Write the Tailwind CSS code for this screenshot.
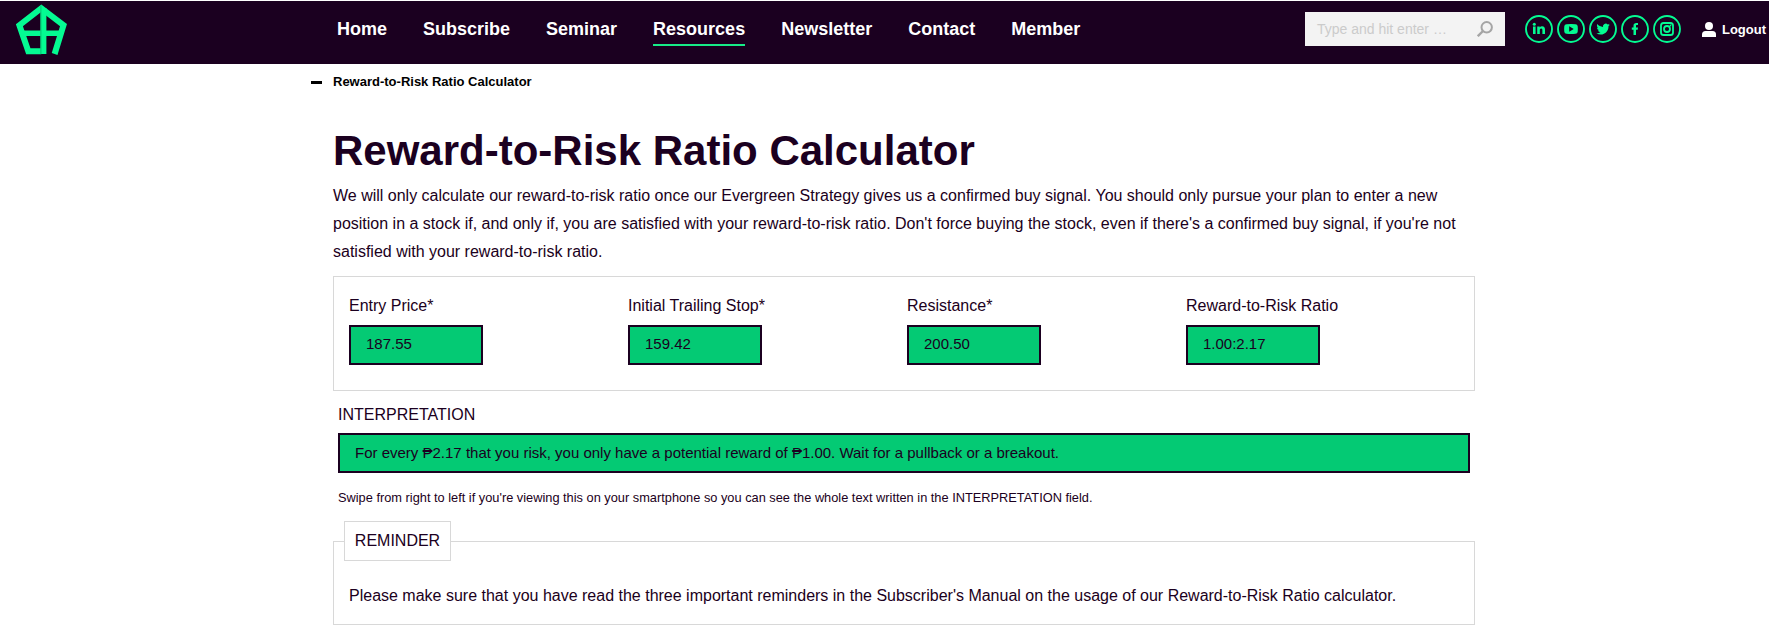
<!DOCTYPE html>
<html lang="en">
<head>
<meta charset="utf-8">
<title>Reward-to-Risk Ratio Calculator</title>
<script src="https://cdn.jsdelivr.net/npm/@tailwindcss/browser@4"></script>
</head>
<body class="bg-white pt-px font-['Liberation_Sans',Arial,sans-serif] text-[#1b0020] w-[1769px] h-[641px] overflow-hidden">
<header class="flex h-[63px] bg-[#1b0020] text-white">
  <svg class="ml-[15px] mt-[3px] h-[51px] w-[53px] shrink-0" viewBox="15 4 53 51" fill="none" stroke="#04fb92" stroke-width="6">
    <path d="M41.3 51.200H28.300L19.400 25.200 41.300 8.200 63.500 25.200 54.600 54"/>
    <path d="M43.400 8V54"/>
    <path d="M22 33.200H61" stroke-width="5.400"/>
    <path d="M40.900 5V54" stroke="#08b56c" stroke-width=".8"/>
  </svg>
  <nav class="ml-[269px] flex gap-9 pt-[14px] text-lg font-bold leading-7">
    <a>Home</a><a>Subscribe</a><a>Seminar</a><a class="h-[31px] border-b-2 border-[#17ec88]">Resources</a><a>Newsletter</a><a>Contact</a><a>Member</a>
  </nav>
  <div class="ml-auto mt-[11px] flex h-[34px] w-[200px] shrink-0 items-center justify-between bg-[#f3f3f3] pl-3 pr-3 text-sm text-[#cbcbcb]">
    <span>Type and hit enter …</span>
    <svg class="h-4 w-4" viewBox="0 0 16 16" fill="none" stroke="#a5a5a5" stroke-width="2"><circle cx="9.7" cy="6.3" r="5.2"/><path d="M6 10 .8 15.2" stroke-width="2.4"/></svg>
  </div>
  <div class="ml-5 mt-[13.5px] flex h-7 shrink-0 gap-1 text-[#04fb92]">
    <svg class="size-7" viewBox="0 0 28 28" fill="currentColor"><circle cx="14" cy="14" r="13" fill="none" stroke="currentColor" stroke-width="1.9"/><circle cx="9.3" cy="9.2" r="1.5"/><path d="M8 11.500h2.600V19H8zM12.200 11.500h2.500v1c.5-.8 1.300-1.200 2.400-1.200 2.100 0 2.900 1.300 2.900 3.400V19h-2.600v-3.800c0-1.100-.3-1.800-1.200-1.800s-1.400.7-1.400 1.800V19h-2.600z"/></svg>
    <svg class="size-7" viewBox="0 0 28 28" fill="currentColor"><circle cx="14" cy="14" r="13" fill="none" stroke="currentColor" stroke-width="1.9"/><path fill-rule="evenodd" d="M9.500 9.200q4.500-.5 9 0 2 .2 2.200 2 .3 3 0 5.600-.2 1.800-2.200 2-4.500.4-9 0-2-.2-2.200-2-.3-3 0-5.600.2-1.800 2.200-2zM12.200 11.200v5.500l4.500-2.700z"/></svg>
    <svg class="size-7" viewBox="0 0 28 28" fill="currentColor"><circle cx="14" cy="14" r="13" fill="none" stroke="currentColor" stroke-width="1.9"/><g transform="translate(7.400 7.300) scale(.56)"><path d="M23.950 4.570a10 10 0 0 1-2.820.77 4.960 4.960 0 0 0 2.160-2.720c-.95.550-2 .950-3.120 1.180a4.920 4.920 0 0 0-8.380 4.480C7.690 8.090 4.070 6.130 1.640 3.160a4.820 4.820 0 0 0-.67 2.480c0 1.710.87 3.210 2.190 4.090a4.900 4.900 0 0 1-2.230-.61v.06a4.920 4.920 0 0 0 3.950 4.830 5 5 0 0 1-2.210.08 4.940 4.940 0 0 0 4.600 3.420A9.870 9.870 0 0 1 0 19.540a13.990 13.990 0 0 0 7.550 2.210c9.050 0 14-7.500 14-13.980 0-.21 0-.42-.02-.63a9.940 9.940 0 0 0 2.420-2.570z"/></g></svg>
    <svg class="size-7" viewBox="0 0 28 28" fill="currentColor"><circle cx="14" cy="14" r="13" fill="none" stroke="currentColor" stroke-width="1.9"/><path d="M12.500 20v-5.200h-1.700v-2.300h1.700v-1.700c0-2 1-2.900 2.800-2.900h1.700v2.200h-1.100c-.7 0-.9.300-.9.900v1.500h2l-.3 2.300H15V20z"/></svg>
    <svg class="size-7" viewBox="0 0 28 28" fill="none" stroke="currentColor" stroke-width="1.8"><circle cx="14" cy="14" r="13"/><rect x="8" y="8" width="12" height="12" rx="2.600"/><circle cx="14" cy="14" r="3"/><circle cx="17.500" cy="10.500" r=".9" fill="currentColor" stroke="none"/></svg>
  </div>
  <div class="ml-[21px] mr-[3px] flex h-[57px] shrink-0 items-center gap-[6px] text-[13px] font-bold">
    <svg class="h-[15px] w-[14px]" viewBox="0 0 14 15" fill="#fff"><circle cx="7" cy="4" r="4"/><path d="M0 15v-2.500Q0 9 3.500 9h7Q14 9 14 12.500V15z"/></svg>
    <span>Logout</span>
  </div>
</header>
<main class="ml-[333px] w-[1142px]">
  <div class="-ml-[22px] flex h-9 items-center gap-[11px] text-[13px] font-bold text-black"><i class="h-[3px] w-[11px] bg-black"></i><span>Reward-to-Risk Ratio Calculator</span></div>
  <h1 class="mt-[27px] text-[42px] font-bold leading-[48px]">Reward-to-Risk Ratio Calculator</h1>
  <p class="mt-[7px] text-base leading-7 whitespace-nowrap">We will only calculate our reward-to-risk ratio once our Evergreen Strategy gives us a confirmed buy signal. You should only pursue your plan to enter a new<br>position in a stock if, and only if, you are satisfied with your reward-to-risk ratio. Don't force buying the stock, even if there's a confirmed buy signal, if you're not<br>satisfied with your reward-to-risk ratio.</p>
  <section class="mt-[10px] flex h-[115px] border border-[#d8d8d8] pl-[15px] pt-[15px]">
    <div class="w-[279px]"><label class="block leading-7">Entry Price*</label><div class="mt-[5px] flex h-10 w-[134px] items-center border-2 border-[#1b0020] bg-[#04ca74] pb-px pl-[15px] text-[15px]">187.55</div></div>
    <div class="w-[279px]"><label class="block leading-7">Initial Trailing Stop*</label><div class="mt-[5px] flex h-10 w-[134px] items-center border-2 border-[#1b0020] bg-[#04ca74] pb-px pl-[15px] text-[15px]">159.42</div></div>
    <div class="w-[279px]"><label class="block leading-7">Resistance*</label><div class="mt-[5px] flex h-10 w-[134px] items-center border-2 border-[#1b0020] bg-[#04ca74] pb-px pl-[15px] text-[15px]">200.50</div></div>
    <div class="w-[279px]"><label class="block leading-7">Reward-to-Risk Ratio</label><div class="mt-[5px] flex h-10 w-[134px] items-center border-2 border-[#1b0020] bg-[#04ca74] pb-px pl-[15px] text-[15px]">1.00:2.17</div></div>
  </section>
  <section class="px-[5px] pt-[10px]">
    <div class="leading-7">INTERPRETATION</div>
    <div class="mt-[4px] flex h-10 items-center border-2 border-[#1b0020] bg-[#04ca74] pl-[15px] text-[15px]">For every ₱2.17 that you risk, you only have a potential reward of ₱1.00. Wait for a pullback or a breakout.</div>
    <p class="mt-[11px] text-[12.8px] leading-7">Swipe from right to left if you're viewing this on your smartphone so you can see the whole text written in the INTERPRETATION field.</p>
  </section>
  <fieldset class="mt-[9px] h-[104px] border border-[#d8d8d8] px-[15px] pt-[21px]">
    <legend class="-ml-[5px] flex h-10 w-[107px] items-center justify-center border border-[#d8d8d8]">REMINDER</legend>
    <p class="leading-7">Please make sure that you have read the three important reminders in the Subscriber's Manual on the usage of our Reward-to-Risk Ratio calculator.</p>
  </fieldset>
</main>
</body>
</html>
